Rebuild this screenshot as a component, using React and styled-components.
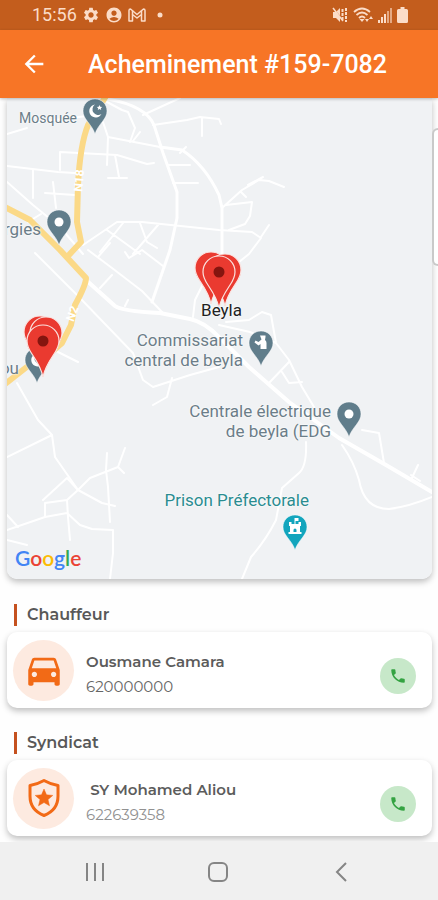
import styled, { createGlobalStyle } from "styled-components";
import {
  MdAccountCircle,
  MdArrowBack,
  MdDirectionsCar,
  MdPhone,
  MdSettings,
} from "react-icons/md";

const GlobalStyle = createGlobalStyle`
  * {
    box-sizing: border-box;
  }

  body {
    margin: 0;
    background-color: #fefefe;
    font-family: Roboto, "Noto Sans", sans-serif;
  }

  button {
    border: 0;
    padding: 0;
    background: none;
    cursor: pointer;
  }
`;

const Screen = styled.div`
  display: flex;
  flex-direction: column;
  min-height: 100vh;
  overflow: hidden;
`;

const StatusBar = styled.div`
  display: flex;
  align-items: center;
  justify-content: space-between;
  height: 30px;
  padding: 0 30px 0 32px;
  background-color: #c35d1d;
  color: #fbdcc8;
`;

const StatusGroup = styled.div`
  display: flex;
  align-items: center;
  gap: ${({ $gap }) => $gap}px;
`;

const Clock = styled.time`
  font-size: 18px;
  line-height: 30px;
`;

const Header = styled.header`
  position: relative;
  z-index: 1;
  display: flex;
  align-items: center;
  gap: 40px;
  height: 68px;
  padding: 0 20px;
  background-color: #f77526;
  box-shadow: 0 1px 3px rgba(0, 0, 0, 0.25);
`;

const BackButton = styled.button`
  display: flex;
  color: #fff;
`;

const Title = styled.h1`
  margin: 0;
  padding-top: 2px;
  color: #fff;
  font-size: 25px;
  font-weight: 500;
  line-height: 32px;
  white-space: nowrap;
`;

const Content = styled.main`
  display: flex;
  flex: 1;
  flex-direction: column;
`;

const MapRow = styled.div`
  display: flex;
  align-items: flex-start;
  padding-left: 7px;
`;

const MapFrame = styled.section`
  position: relative;
  flex: 1;
  height: 481px;
  overflow: hidden;
  border-radius: 0 0 10px 10px;
  background-color: #f0f2f4;
`;

const MapShadow = styled.div`
  display: flex;
  flex: 1;
  border-radius: 0 0 10px 10px;
  box-shadow: 0 3px 6px rgba(0, 0, 0, 0.25);
`;

const NextCard = styled.div`
  width: 6px;
  height: 138px;
  margin-top: 30px;
  border: 2px solid #c9c9c9;
  border-right: 0;
  border-radius: 6px 0 0 6px;
  background-color: #fff;
`;

const Roads = styled.svg`
  display: block;
  width: 100%;
  height: 100%;
  fill: none;
  stroke-linecap: round;
  stroke-linejoin: round;
`;

const RoadName = styled.text`
  fill: #fff;
  stroke: none;
  font-size: 12px;
  font-weight: 700;
  text-anchor: middle;
`;

// pins and labels are anchored at a point of the map, given in map units
const MAP_WIDTH = 425;

const Pin = styled.svg`
  position: absolute;
  left: ${({ $x }) => ($x / MAP_WIDTH) * 100}%;
  top: ${({ $y }) => $y}px;
  transform: translate(-50%, -100%);
`;

const Label = styled.span`
  position: absolute;
  right: ${({ $x }) => 100 - ($x / MAP_WIDTH) * 100}%;
  top: ${({ $y }) => $y}px;
  color: ${({ $color }) => $color || "#6b7d88"};
  font-size: ${({ $size }) => $size || 17}px;
  line-height: 20px;
  text-align: right;
  white-space: pre;
  text-shadow: 0 0 2px #fff, 0 0 2px #fff;
`;

const GoogleLogo = styled.div`
  position: absolute;
  left: 8px;
  bottom: 8px;
  font-family: Lato, sans-serif;
  font-size: 21px;
  font-weight: 600;
  line-height: 26px;
`;

const Letter = styled.span`
  color: ${({ $color }) => $color};
`;

const Contacts = styled.div`
  display: flex;
  flex-direction: column;
  gap: 24px;
  padding: 25px 6px 6px 7px;
`;

const Contact = styled.section`
  display: flex;
  flex-direction: column;
  gap: 6px;
`;

const ContactTitle = styled.h2`
  margin: 0 0 0 7px;
  padding-left: 10px;
  border-left: 3px solid #c5511f;
  color: #585858;
  font-family: Montserrat, Inter, sans-serif;
  font-size: 16px;
  font-weight: 600;
  line-height: 22px;
`;

const ContactCard = styled.div`
  display: flex;
  align-items: center;
  gap: 12px;
  height: 76px;
  padding: 0 16px 0 6px;
  border-radius: 10px;
  background-color: #fff;
  box-shadow: 0 3px 6px rgba(0, 0, 0, 0.25);
`;

const Avatar = styled.div`
  display: flex;
  align-items: center;
  justify-content: center;
  width: 61px;
  height: 61px;
  border-radius: 50%;
  background-color: #fdeae0;
  color: #f26a16;
`;

const ContactText = styled.div`
  display: flex;
  flex: 1;
  flex-direction: column;
  gap: 3px;
  padding-top: 8px;
  font-family: Montserrat, Inter, sans-serif;
  line-height: 22px;
  white-space: pre;
`;

const Name = styled.span`
  color: #5c5c5c;
  font-size: 15px;
  font-weight: 600;
`;

const Phone = styled.span`
  color: ${({ $muted }) => ($muted ? "#919191" : "#666")};
  font-size: 15px;
`;

const CallButton = styled.button`
  display: flex;
  align-self: flex-end;
  align-items: center;
  justify-content: center;
  width: 36px;
  height: 36px;
  margin-bottom: 14px;
  border-radius: 50%;
  background-color: #c7e8c9;
  color: #34a342;
`;

const NavBar = styled.nav`
  display: grid;
  grid-template-columns: repeat(3, 1fr);
  height: 58px;
  padding: 2px 35px 0 33px;
  background-color: #f0f0f0;
`;

const NavButton = styled.button`
  display: flex;
  align-items: center;
  justify-content: center;
  color: #858585;
`;

const GmailIcon = () => (
  <svg width="18" height="14" viewBox="0 0 18 14" fill="none" stroke="currentColor" strokeWidth="1.5" strokeLinejoin="round">
    <path d="M1 13V2.500Q1 1 2.500 1L9 6.500 15.500 1Q17 1 17 2.500V13H13.500V6.500L9 10 4.500 6.500V13Z" />
    <path d="M4.500 2.500V6.500M13.500 2.500V6.500" />
  </svg>
);

const MuteIcon = () => (
  <svg width="16" height="16" viewBox="0 0 16 16" fill="currentColor">
    <path d="M1 5h3l4-4v14l-4-4H1Z" />
    <path d="M1 1.500 9 10" stroke="#c35d1d" strokeWidth="1" />
    <path d="M1 1 11 14" stroke="currentColor" strokeWidth="1.500" />
    <path d="M10.500 2v12M14 1v14" stroke="currentColor" strokeWidth="2" strokeDasharray="3 1" />
  </svg>
);

const WifiIcon = () => (
  <svg width="20" height="16" viewBox="0 0 20 16" fill="none" stroke="currentColor" strokeWidth="1.800">
    <path d="M1 5Q9-2 17 5M3.500 8Q9 3 14.500 8M6 11Q9 8 12 11" />
    <path d="m9 15-2.500-3h5Z" fill="currentColor" stroke="none" />
    <path d="m14 15-2-3h4ZM18 9l-2 3h4Z" fill="currentColor" stroke="none" />
  </svg>
);

const SignalIcon = () => (
  <svg width="14" height="15" viewBox="0 0 14 15" fill="currentColor">
    <path d="M0 12h2v3H0ZM3 9h2v6H3ZM6 6h2v9H6Z" />
    <path d="M9 3h2v12H9ZM12 0h2v15h-2Z" opacity="0.6" />
  </svg>
);

const BatteryIcon = () => (
  <svg width="11" height="16" viewBox="0 0 11 16" fill="currentColor">
    <path d="M3.500 0h4v2H9.500Q11 2 11 3.500v11Q11 16 9.500 16h-8Q0 16 0 14.500v-11Q0 2 1.500 2h2Z" />
  </svg>
);

const ShieldIcon = () => (
  <svg width="34" height="40" viewBox="0 0 34 40" fill="none" stroke="currentColor" strokeWidth="3" strokeLinejoin="round">
    <path d="M17 2.500Q24 6.500 31 7.500V18C31 27 26 34 17 37.500 8 34 3 27 3 18V7.500Q10 6.500 17 2.500Z" />
    <path
      d="m17 11 2.500 5.800 6.300.6-4.800 4.200 1.500 6.200-5.500-3.300-5.500 3.300 1.500-6.200-4.800-4.200 6.300-.6Z"
      fill="currentColor"
      strokeWidth="0.500"
    />
  </svg>
);

const placeGlyphs = {
  dot: <circle cx="13" cy="13" r="4.500" fill="#fff" />,
  mosque: (
    <>
      <path d="M13 6.500a6.500 6.500 0 1 0 6.500 9.500 5.500 5.500 0 0 1-6.500-9.500Z" fill="#fff" />
      <path d="m17.500 7 .8 1.700 1.900.2-1.400 1.300.4 1.900-1.700-1-1.700 1 .4-1.900-1.400-1.300 1.900-.2Z" fill="#fff" />
    </>
  ),
  police: (
    <path d="M12 5.500h5.500v1.500l-.5 3q1.500 1 1.500 3v6h-6v-5l-2 1.500-4-3 1-2 3 1.500 3-2.500Z" fill="#fff" />
  ),
  prison: (
    <path
      d="M12.500 4h4v3h-3v3h3V8h2.500v4h-1v6h1.500v2h-13v-2H8v-6H7V8h2.500v2h3ZM11.500 18h3v-2a1.500 1.500 0 0 0-3 0Z"
      fill="#fff"
      fillRule="evenodd"
    />
  ),
};

const PlacePin = ({ x, y, color = "#607d8b", glyph = "dot" }) => (
  <Pin $x={x} $y={y} width="26" height="37" viewBox="0 0 26 37">
    <path
      d="M13 1C6 1 1 6.300 1 13c0 4 1.700 6.700 4.500 10.500C8.500 27.500 11.500 31 13 36c1.500-5 4.500-8.500 7.500-12.500C23.300 19.700 25 17 25 13 25 6.300 20 1 13 1Z"
      fill={color}
      stroke="#fff"
      strokeWidth="0.500"
    />
    {placeGlyphs[glyph]}
  </Pin>
);

const TripPin = ({ x, y }) => (
  <Pin $x={x} $y={y} width="34" height="54" viewBox="0 0 34 54">
    <path
      d="M17 1C8 1 1 8 1 17c0 5.500 2.200 9 5.300 13.500C10.300 36.500 15 43 17 53c2-10 6.700-16.500 10.700-22.500C30.800 26 33 22.500 33 17 33 8 26 1 17 1Z"
      fill="#ea3a30"
      stroke="#fbe3e0"
      strokeWidth="1.200"
    />
    <circle cx="17" cy="17" r="5.500" fill="#85150f" />
  </Pin>
);

const minorRoads = [
  "M7 134 27 128M38 122 87 116M107 102 122 110 128 112 135 128 130 142M140 132 133 141",
  "M143 115 180 98M153 125 187 120 200 117 219 119 221 124M202 118V136",
  "M103 122 108 137 107 165M186 147 180 153M108 137 160 147",
  "M60 170V152L117 155 147 164 154 163M115 155 119 177M108 178H127",
  "M7 166 58 172 75 173M33 170V198M7 182 33 205 60 227 83 254M45 193 75 195M53 182 56 208",
  "M168 165H190M173 183H198M28 222 41 214",
  "M83 245 117 222 142 222 219 230 252 232 261 238 249 254 239 262M107 230 140 254M123 223 100 252M158 225 133 254M140 223 147 242 157 248",
  "M222 208 242 190 259 180 269 181 284 187M248 185 263 177M241 192 246 197M226 205 252 202 250 216 245 224 229 230M261 237 269 225",
  "M35 253 80 298 133 353 143 380 153 387 190 375 219 367M172 378 167 397 153 405",
  "M88 250 112 268 142 291 162 312M112 275 100 288M98 257 110 243M125 252 129 258 142 250 163 266M125 306 128 300",
  "M206 278 195 300 193 317M58 352 78 362M17 383 38 420 52 435 55 457 78 490 102 503 115 506M7 457 52 435",
  "M43 500 67 478 78 490 90 478 118 467 125 448M118 467 124 473M107 453 106 470 108 487 110 522",
  "M45 517V503L67 500 78 490M7 530 45 517 67 513 80 525 92 529 113 530V553L110 579M67 500 68 517 70 540M7 515 18 527M7 540 27 545",
  "M306 442Q307 466 299 473L282 488 276 520Q266 540 251 557L242 579",
  "M342 445Q354 462 359 480 364 509 389 509 408 507 432 497M362 430 379 433 384 463M418 465 411 480M411 475 420 481",
  "M226 322 249 320 262 312 271 315 276 343 289 360 302 387 314 407M269 383 289 362M282 372 289 383 302 382M219 325 250 332 276 343",
];

const App = () => {
  return (
    <Screen>
      <GlobalStyle />
      <StatusBar>
        <StatusGroup $gap={5}>
          <Clock>15:56</Clock>
          <MdSettings size={18} />
          <MdAccountCircle size={18} />
          <GmailIcon />
          <svg width="18" height="6" viewBox="0 0 18 6" fill="currentColor">
            <circle cx="9" cy="3" r="2.500" />
          </svg>
        </StatusGroup>
        <StatusGroup $gap={5}>
          <MuteIcon />
          <WifiIcon />
          <SignalIcon />
          <BatteryIcon />
        </StatusGroup>
      </StatusBar>

      <Header>
        <BackButton aria-label="Retour">
          <MdArrowBack size={28} />
        </BackButton>
        <Title>Acheminement #159-7082</Title>
      </Header>

      <Content>
        <MapRow>
          <MapShadow>
            <MapFrame aria-label="Carte">
              <Roads viewBox="7 98 425 481" preserveAspectRatio="none">
                <g stroke="#fff" strokeWidth="2">
                  {minorRoads.map((d) => (
                    <path key={d} d={d} />
                  ))}
                </g>
                <g stroke="#fff" strokeWidth="3">
                  <path d="M108 99Q146 106 154 125L163 153 177 192V218L170 250 152 302" />
                  <path d="M160 147 182 150Q205 165 219 195L222 208V256" />
                </g>
                <path
                  d="M86 280 115 306Q121 311 160 313L190 319Q205 322 220 338L249 367 289 402 339 438 386 465 432 492"
                  stroke="#fff"
                  strokeWidth="4"
                />
                <g stroke="#fbd987" strokeWidth="6">
                  <path d="M106 96 88 125Q80 145 78 185L77 222 81 242 68 256" />
                  <path d="M5 207 30 220 60 250 86 278Q86 285 75 305L71 325 62 343Q48 356 28 366L5 384" />
                </g>
                <RoadName transform="translate(83 181) rotate(-85)">N18</RoadName>
                <RoadName transform="translate(76 315) rotate(-70)">N2</RoadName>
              </Roads>

              <Label $x={70} $y={10} $size={14}>Mosquée</Label>
              <Label $x={34} $y={121}>rgies</Label>
              <Label $x={12} $y={260}>ou</Label>
              <Label $x={236} $y={232}>{"Commissariat\ncentral de beyla"}</Label>
              <Label $x={324} $y={303}>{"Centrale électrique\nde beyla (EDG"}</Label>
              <Label $x={302} $y={392} $color="#2a8c90">Prison Préfectorale</Label>

              <PlacePin x={88} y={37} glyph="mosque" />
              <PlacePin x={52} y={148} />
              <PlacePin x={30} y={286} glyph="mosque" />
              <PlacePin x={254} y={269} glyph="police" />
              <PlacePin x={342} y={340} />
              <PlacePin x={288} y={453} color="#12a5bd" glyph="prison" />

              <TripPin x={33} y={271} />
              <TripPin x={39} y={272} />
              <TripPin x={36} y={280} />
              <TripPin x={204} y={207} />
              <TripPin x={218} y={209} />
              <TripPin x={212} y={211} />
              <Label $x={235} $y={202} $color="#222">Beyla</Label>

              <GoogleLogo>
                <Letter $color="#4285f4">G</Letter>
                <Letter $color="#ea4335">o</Letter>
                <Letter $color="#fbbc05">o</Letter>
                <Letter $color="#4285f4">g</Letter>
                <Letter $color="#34a853">l</Letter>
                <Letter $color="#ea4335">e</Letter>
              </GoogleLogo>
            </MapFrame>
          </MapShadow>
          <NextCard />
        </MapRow>

        <Contacts>
          <Contact>
            <ContactTitle>Chauffeur</ContactTitle>
            <ContactCard>
              <Avatar>
                <MdDirectionsCar size={42} />
              </Avatar>
              <ContactText>
                <Name>Ousmane Camara</Name>
                <Phone>620000000</Phone>
              </ContactText>
              <CallButton aria-label="Appeler Ousmane Camara">
                <MdPhone size={18} />
              </CallButton>
            </ContactCard>
          </Contact>

          <Contact>
            <ContactTitle>Syndicat</ContactTitle>
            <ContactCard>
              <Avatar>
                <ShieldIcon />
              </Avatar>
              <ContactText>
                <Name> SY Mohamed Aliou</Name>
                <Phone $muted>622639358</Phone>
              </ContactText>
              <CallButton aria-label="Appeler SY Mohamed Aliou">
                <MdPhone size={18} />
              </CallButton>
            </ContactCard>
          </Contact>
        </Contacts>
      </Content>

      <NavBar>
        <NavButton aria-label="Applications récentes">
          <svg width="20" height="20" viewBox="0 0 20 20" stroke="currentColor" strokeWidth="2">
            <path d="M2 1v18M10 1v18M18 1v18" />
          </svg>
        </NavButton>
        <NavButton aria-label="Accueil">
          <svg width="20" height="20" viewBox="0 0 20 20" fill="none" stroke="currentColor" strokeWidth="2">
            <rect x="1" y="1" width="18" height="18" rx="5" />
          </svg>
        </NavButton>
        <NavButton aria-label="Précédent">
          <svg width="12" height="20" viewBox="0 0 12 20" fill="none" stroke="currentColor" strokeWidth="2">
            <path d="M11 1 2 10l9 9" />
          </svg>
        </NavButton>
      </NavBar>
    </Screen>
  );
};

export default App;
